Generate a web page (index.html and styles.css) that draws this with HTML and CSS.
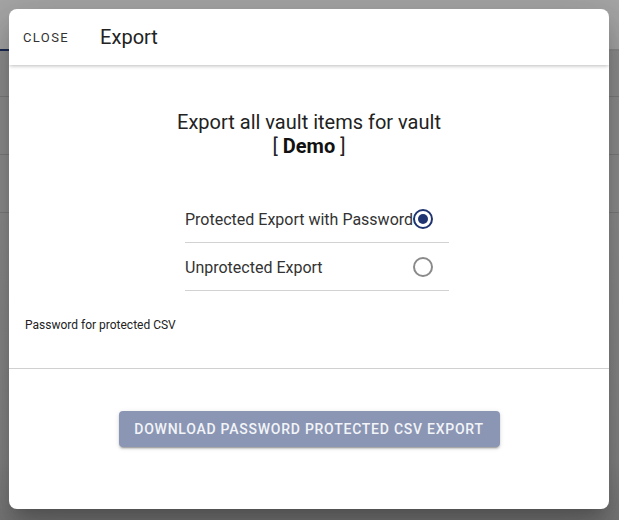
FILE: index.html
```html
<!DOCTYPE html>
<html>
<head>
<meta charset="utf-8">
<link rel="stylesheet" href="styles.css">
</head>
<body>
<div class="app">
  <div class="app-header"><div class="tab-line"></div></div>
  <div class="app-row first"></div>
  <div class="app-row"></div>
  <div class="app-row"></div>
  <div class="app-rest"></div>
</div>
<div class="dialog">
  <div class="dlg-header">
    <span class="close">CLOSE</span>
    <span class="title">Export</span>
  </div>
  <div class="dlg-content">
    <div class="heading">Export all vault items for vault<br>[ <b>Demo</b> ]</div>
    <div class="options">
      <div class="option">
        <span class="label">Protected Export with Password</span>
        <span class="radio checked"></span>
      </div>
      <div class="option">
        <span class="label">Unprotected Export</span>
        <span class="radio"></span>
      </div>
    </div>
    <div class="field-label">Password for protected CSV</div>
  </div>
  <div class="dlg-actions">
    <button class="btn">DOWNLOAD PASSWORD PROTECTED CSV EXPORT</button>
  </div>
</div>
</body>
</html>
```
FILE: styles.css
```css
html, body {
  margin: 0;
  padding: 0;
  width: 619px;
  height: 520px;
  overflow: hidden;
  font-family: Roboto, "Liberation Sans", sans-serif;
}
body {
  background: #8d8d8d;
  position: relative;
}
.app {
  display: flex;
  flex-direction: column;
  height: 520px;
}
.app-header {
  height: 49px;
  background: #a6a6a6;
  position: relative;
  border-bottom: 2px solid #8a8a8a;
}
.tab-line {
  position: absolute;
  left: 0;
  bottom: -2px;
  width: 40px;
  height: 2px;
  background: #1c2a52;
}
.app-row {
  height: 57px;
  border-bottom: 1px solid #7d7d7d;
  background: #8f8f8f;
}
.app-row.first {
  height: 45px;
}
.app-rest {
  flex: 1;
  background: linear-gradient(#8e8e8e, #858585 80%, #777);
}
.dialog {
  position: absolute;
  left: 9px;
  top: 9px;
  width: 600px;
  height: 500px;
  background: #fff;
  border-radius: 8px;
  box-shadow: 0 11px 15px -7px rgba(0,0,0,.2), 0 24px 38px 3px rgba(0,0,0,.14), 0 9px 46px 8px rgba(0,0,0,.12);
  display: flex;
  flex-direction: column;
  overflow: hidden;
}
.dlg-header {
  height: 56px;
  display: flex;
  align-items: center;
  box-shadow: 0 2px 4px -1px rgba(0,0,0,.2), 0 1px 3px rgba(0,0,0,.08);
  position: relative;
  z-index: 1;
  flex: none;
}
.close {
  margin-left: 14px;
  font-size: 13px;
  letter-spacing: 1.4px;
  color: #333;
}
.title {
  margin-left: 31px;
  font-size: 20px;
  color: #222;
}
.dlg-content {
  padding: 45px 16px 35px;
  border-bottom: 1px solid #d0d0d0;
}
.heading {
  text-align: center;
  font-size: 20px;
  line-height: 24px;
  color: #222;
}
.heading b {
  font-weight: 700;
  color: #111;
}
.options {
  width: 264px;
  margin: 37px 0 0 160px;
}
.option {
  height: 47px;
  padding-top: 1px;
  box-sizing: border-box;
  height: 48px;
  display: flex;
  align-items: center;
  border-bottom: 1px solid #d2d2d2;
  font-size: 16px;
  color: #333;
}
.label {
  flex: 1;
  white-space: nowrap;
}
.radio {
  width: 16px;
  height: 16px;
  border: 2px solid #8a8a8a;
  border-radius: 50%;
  margin-right: 16px;
  position: relative;
  flex: none;
}
.radio.checked {
  border-color: #1f3470;
}
.radio.checked::after {
  content: "";
  position: absolute;
  left: 3px;
  top: 3px;
  width: 10px;
  height: 10px;
  border-radius: 50%;
  background: #1f3470;
}
.field-label {
  margin-top: 26px;
  font-size: 12px;
  line-height: 16px;
  color: #222;
}
.dlg-actions {
  display: flex;
  justify-content: center;
  padding-top: 42px;
}
.btn {
  width: 381px;
  height: 36px;
  border: none;
  border-radius: 4px;
  background: #8b96b4;
  color: #f2f4f8;
  font-family: Roboto, "Liberation Sans", sans-serif;
  font-size: 14px;
  font-weight: 500;
  letter-spacing: 0.75px;
  box-shadow: 0 3px 1px -2px rgba(0,0,0,.2), 0 2px 2px rgba(0,0,0,.14), 0 1px 5px rgba(0,0,0,.12);
}
```
